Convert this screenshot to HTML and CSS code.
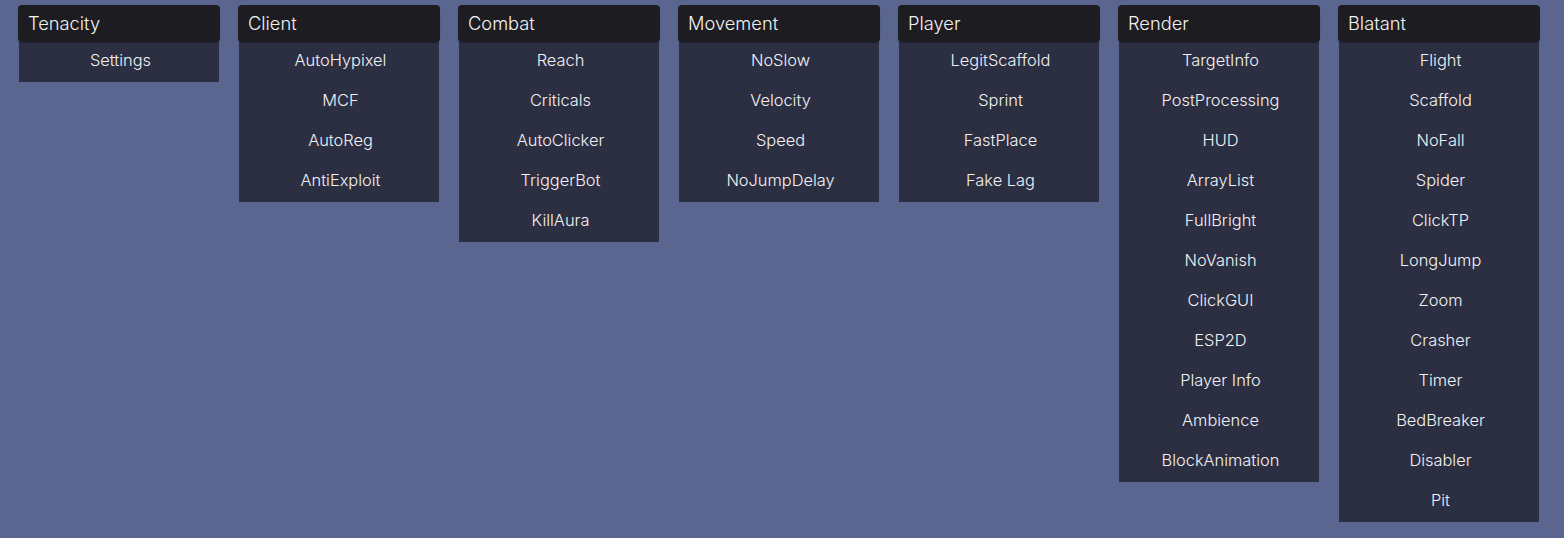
FILE: index.html
```html
<!DOCTYPE html>
<html>
<head>
<meta charset="utf-8">
<link rel="stylesheet" href="styles.css">
</head>
<body>
<div class="panels">
  <div class="panel">
    <div class="head">Tenacity</div>
    <div class="list"><div class="item">Settings</div></div>
  </div>
  <div class="panel">
    <div class="head">Client</div>
    <div class="list">
      <div class="item">AutoHypixel</div>
      <div class="item">MCF</div>
      <div class="item">AutoReg</div>
      <div class="item">AntiExploit</div>
    </div>
  </div>
  <div class="panel">
    <div class="head">Combat</div>
    <div class="list">
      <div class="item">Reach</div>
      <div class="item">Criticals</div>
      <div class="item">AutoClicker</div>
      <div class="item">TriggerBot</div>
      <div class="item">KillAura</div>
    </div>
  </div>
  <div class="panel">
    <div class="head">Movement</div>
    <div class="list">
      <div class="item">NoSlow</div>
      <div class="item">Velocity</div>
      <div class="item">Speed</div>
      <div class="item">NoJumpDelay</div>
    </div>
  </div>
  <div class="panel">
    <div class="head">Player</div>
    <div class="list">
      <div class="item">LegitScaffold</div>
      <div class="item">Sprint</div>
      <div class="item">FastPlace</div>
      <div class="item">Fake Lag</div>
    </div>
  </div>
  <div class="panel">
    <div class="head">Render</div>
    <div class="list">
      <div class="item">TargetInfo</div>
      <div class="item">PostProcessing</div>
      <div class="item">HUD</div>
      <div class="item">ArrayList</div>
      <div class="item">FullBright</div>
      <div class="item">NoVanish</div>
      <div class="item">ClickGUI</div>
      <div class="item">ESP2D</div>
      <div class="item">Player Info</div>
      <div class="item">Ambience</div>
      <div class="item">BlockAnimation</div>
    </div>
  </div>
  <div class="panel">
    <div class="head">Blatant</div>
    <div class="list">
      <div class="item">Flight</div>
      <div class="item">Scaffold</div>
      <div class="item">NoFall</div>
      <div class="item">Spider</div>
      <div class="item">ClickTP</div>
      <div class="item">LongJump</div>
      <div class="item">Zoom</div>
      <div class="item">Crasher</div>
      <div class="item">Timer</div>
      <div class="item">BedBreaker</div>
      <div class="item">Disabler</div>
      <div class="item">Pit</div>
    </div>
  </div>
</div>
</body>
</html>
```
FILE: styles.css
```css
html, body {
  margin: 0;
  padding: 0;
  background: #5b6690;
  height: 100%;
}
body {
  font-family: Inter, "Noto Sans", sans-serif;
  color: #f2f2f4;
}
.panels {
  display: flex;
  align-items: flex-start;
  gap: 18px;
  padding: 5px 0 0 18px;
}
.panel {
  width: 202px;
  display: flex;
  flex-direction: column;
}
.head {
  height: 37px;
  box-sizing: border-box;
  background: #1d1c21;
  border-radius: 4px;
  padding-left: 10px;
  font-size: 18.3px;
  font-weight: 350;
  line-height: 36px;
  box-shadow: 0 1px 1px rgba(0,0,0,0.35);
  position: relative;
  z-index: 1;
}
.list {
  margin: 0 1px;
  background: #2c2f42;
}
.item {
  height: 40px;
  line-height: 36px;
  text-align: center;
  font-size: 16.4px;
  font-weight: 350;
  padding-left: 3px;
}
```
